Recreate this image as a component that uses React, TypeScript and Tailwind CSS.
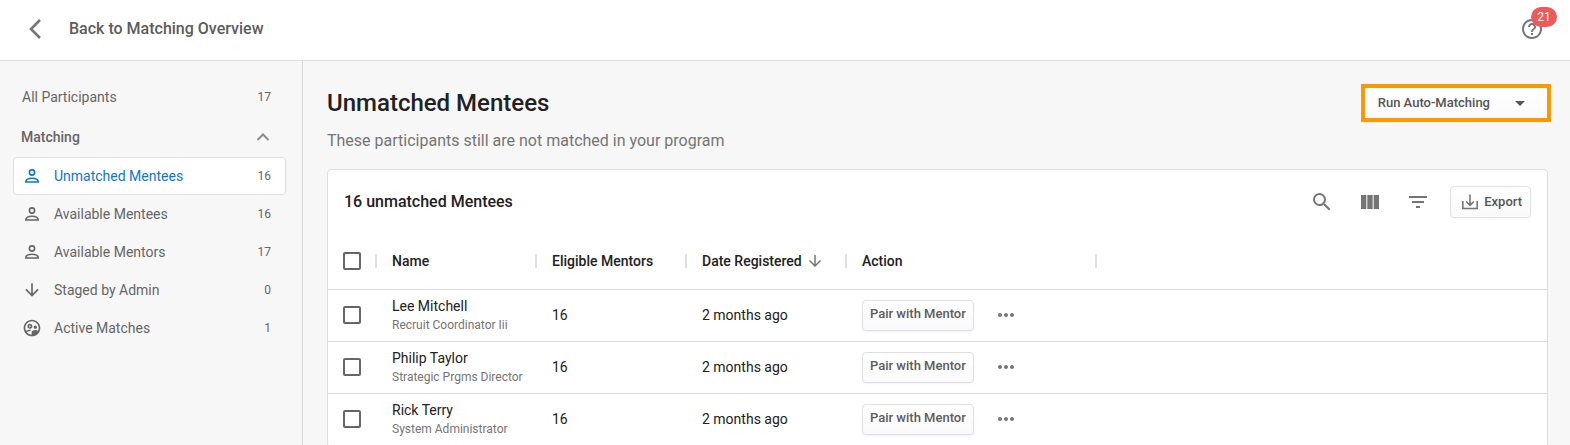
import { useState } from 'react'
import {
  MdArrowDownward,
  MdArrowDropDown,
  MdFilterList,
  MdHelpOutline,
  MdMoreHoriz,
  MdOutlineSupervisedUserCircle,
  MdSearch,
  MdViewColumn,
} from 'react-icons/md'

const navItems = [
  { label: 'Unmatched Mentees', count: 16, icon: PersonIcon },
  { label: 'Available Mentees', count: 16, icon: PersonIcon },
  { label: 'Available Mentors', count: 17, icon: PersonIcon },
  { label: 'Staged by Admin', count: 0, icon: MdArrowDownward },
  { label: 'Active Matches', count: 1, icon: MdOutlineSupervisedUserCircle },
]

const mentees = [
  { name: 'Lee Mitchell', title: 'Recruit Coordinator Iii', eligible: 16, registered: '2 months ago' },
  { name: 'Philip Taylor', title: 'Strategic Prgms Director', eligible: 16, registered: '2 months ago' },
  { name: 'Rick Terry', title: 'System Administrator', eligible: 16, registered: '2 months ago' },
]

function PersonIcon({ className }: { className?: string }) {
  return (
    <svg viewBox="0 0 20 20" className={className} fill="none" stroke="currentColor" strokeWidth="1.6">
      <circle cx="10" cy="6.500" r="2.600" />
      <path d="M3.800 16c0-2.700 2.700-3.700 6.200-3.700s6.200 1 6.200 3.700z" />
    </svg>
  )
}

function Checkbox({ label }: { label: string }) {
  return (
    <input
      type="checkbox"
      aria-label={label}
      className="block size-[18px] appearance-none rounded-xs border-2 border-[#666] bg-white checked:bg-[#666]"
    />
  )
}

function HeaderCell({ children }: { children?: React.ReactNode }) {
  return (
    <th className="p-0 text-left font-medium">
      <div className="flex h-[14px] items-center border-r-2 border-[#e0e0e0] pl-[15px]">{children}</div>
    </th>
  )
}

export default function App() {
  const [active, setActive] = useState('Unmatched Mentees')

  return (
    <div className="flex h-screen flex-col overflow-hidden bg-[#f7f7f7] font-[Roboto,sans-serif] text-[#212121]">
      <header className="flex h-[61px] shrink-0 items-center justify-between border-b border-[#dedede] bg-white pr-[26px] pb-[2px] pl-7">
        <a href="#overview" className="flex items-center gap-[27px] font-medium text-[#5c5c5c]">
          <svg viewBox="0 0 14 20" className="h-5 w-[14px]" fill="none" stroke="#757575" strokeWidth="2.6">
            <path d="M12 1 3 10l9 9" />
          </svg>
          Back to Matching Overview
        </a>
        <button type="button" aria-label="Help" className="relative text-[#757575]">
          <MdHelpOutline className="size-6" />
          <span className="absolute -top-[10px] left-[11px] flex h-5 w-[26px] items-center justify-center rounded-full bg-[#ee5a5a] text-xs text-white">
            21
          </span>
        </button>
      </header>

      <div className="flex min-h-0 flex-1">
        <aside className="w-[303px] shrink-0 border-r border-[#d6d6d6] px-4 pt-4 pl-[13px] text-sm text-[#666]">
          <a href="#all" className="flex h-[39px] items-center justify-between pr-[15px] pl-[9px]">
            All Participants
            <span className="text-xs">17</span>
          </a>
          <button type="button" className="flex h-[41px] w-full items-center justify-between pr-4 pl-2 font-medium">
            Matching
            <svg viewBox="0 0 14 14" className="size-[14px]" fill="none" stroke="#8c8c8c" strokeWidth="2">
              <path d="M1.500 10 7 4.500l5.500 5.500" />
            </svg>
          </button>
          <nav>
            {navItems.map(({ label, count, icon: Icon }) => (
              <a
                key={label}
                href="#list"
                onClick={() => setActive(label)}
                className={`flex h-[38px] items-center rounded border pr-[14px] pl-2 ${
                  label === active ? 'border-[#dedede] bg-white text-[#0b76d8]' : 'border-transparent'
                }`}
              >
                <Icon className="mr-3 size-5" />
                <span className="flex-1">{label}</span>
                <span className="text-xs text-[#666]">{count}</span>
              </a>
            ))}
          </nav>
        </aside>

        <main className="min-w-0 flex-1 pt-[23px] pr-[22px] pl-6">
          <div className="flex items-center justify-between">
            <h1 className="text-2xl font-medium">Unmatched Mentees</h1>
            <button
              type="button"
              className="-mr-[3px] flex h-[38px] items-center gap-[18px] border-4 border-[#ff9800] bg-linear-to-b from-white to-[#fafafa] pr-[15px] pl-[13px] text-[13px] font-medium text-[#555]"
            >
              Run Auto-Matching
              <MdArrowDropDown className="size-6" />
            </button>
          </div>
          <p className="mt-[7px] text-base text-[#757575]">These participants still are not matched in your program</p>

          <section className="mt-4 rounded border border-[#dedede] bg-white">
            <div className="flex h-16 items-center justify-between px-4">
              <h2 className="text-base font-medium">16 unmatched Mentees</h2>
              <div className="flex items-center gap-6 text-[#757575]">
                <button type="button" aria-label="Search">
                  <MdSearch className="size-6" />
                </button>
                <button type="button" aria-label="Columns">
                  <MdViewColumn className="size-6" />
                </button>
                <button type="button" aria-label="Filter">
                  <MdFilterList className="size-6" />
                </button>
                <button
                  type="button"
                  className="-ml-1 flex h-8 items-center gap-[5px] rounded border border-[#e0e3e6] bg-linear-to-b from-white to-[#fafafa] pr-2 pl-[10px] text-[13px] font-medium text-[#555] shadow-xs"
                >
                  <svg viewBox="0 0 18 18" className="size-[18px]" fill="none" stroke="#757575" strokeWidth="1.6">
                    <path d="M1.800 8v7.500h14.400V8M9 1.500v10.700M5.200 8.500 9 12.300l3.800-3.800" />
                  </svg>
                  Export
                </button>
              </div>
            </div>

            <table className="w-full table-fixed text-sm">
              <colgroup>
                <col className="w-[49px]" />
                <col className="w-40" />
                <col className="w-[150px]" />
                <col className="w-40" />
                <col className="w-[250px]" />
                <col />
              </colgroup>
              <thead>
                <tr className="h-[55px] border-b border-[#dedede]">
                  <HeaderCell>
                    <Checkbox label="Select all" />
                  </HeaderCell>
                  <HeaderCell>Name</HeaderCell>
                  <HeaderCell>Eligible Mentors</HeaderCell>
                  <HeaderCell>
                    Date Registered
                    <MdArrowDownward className="ml-1 size-[18px] text-[#757575]" />
                  </HeaderCell>
                  <HeaderCell>Action</HeaderCell>
                  <td />
                </tr>
              </thead>
              <tbody>
                {mentees.map((mentee) => (
                  <tr key={mentee.name} className="h-[52px] border-b border-[#dedede]">
                    <td className="p-0 pl-[15px]">
                      <Checkbox label={mentee.name} />
                    </td>
                    <td className="p-0 pl-[15px] whitespace-nowrap">
                      <div className="leading-5">{mentee.name}</div>
                      <div className="text-xs leading-[18px] text-[#757575]">{mentee.title}</div>
                    </td>
                    <td className="p-0 pl-[15px]">{mentee.eligible}</td>
                    <td className="p-0 pl-[15px]">{mentee.registered}</td>
                    <td className="p-0 pl-[15px]">
                      <div className="flex items-center gap-5">
                        <button
                          type="button"
                          className="h-[31px] rounded border border-[#dcdfe3] bg-linear-to-b from-white to-[#fafafa] px-[7px] pb-[2px] text-[13px] font-medium text-[#5c5c5c] shadow-xs"
                        >
                          Pair with Mentor
                        </button>
                        <button type="button" aria-label="More actions" className="text-[#757575]">
                          <MdMoreHoriz className="size-6" />
                        </button>
                      </div>
                    </td>
                    <td />
                  </tr>
                ))}
              </tbody>
            </table>
          </section>
        </main>
      </div>
    </div>
  )
}
